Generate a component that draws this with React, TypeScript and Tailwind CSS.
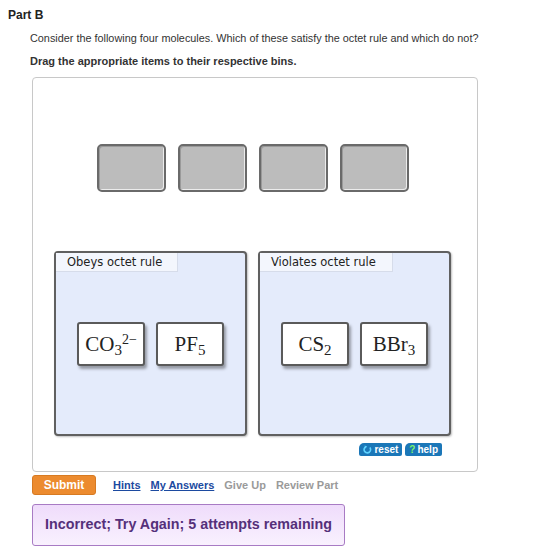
export default function App() {
  const slots = [0, 1, 2, 3];

  return (
    <div className="min-h-[555px] w-[560px] bg-white text-[#333] [font-family:'Liberation_Sans',Arial,sans-serif]">
      <div className="pl-[8px] pt-[8px] text-[12px] font-bold leading-[15px] text-[#222]">Part B</div>
      <div className="pl-[30px]">
        <p className="mt-[8px] text-[10.85px] leading-[14px] text-[#333]">
          Consider the following four molecules. Which of these satisfy the octet rule and which do not?
        </p>
        <p className="mt-[9px] text-[11px] font-bold leading-[14px] text-[#333]">
          Drag the appropriate items to their respective bins.
        </p>
      </div>

      <div className="ml-[32px] mt-[9px] h-[395px] w-[446px] rounded-[4px] border border-[#c8c8c8] bg-white">
        <div className="ml-[64px] mt-[66px] flex gap-[12px]">
          {slots.map(i => (
            <div
              key={i}
              className="h-[48px] w-[69px] rounded-[5px] border-2 border-[#6a6a6a] bg-[#bcbcbc] shadow-[inset_-1px_-1px_0_#ececec,inset_1px_1px_0_#9a9a9a]"
            />
          ))}
        </div>

        <div className="ml-[21px] mt-[59px] flex gap-[11px]">
          <Bin label="Obeys octet rule" tabWidth={122}>
            <Card>
              CO<Sub>3</Sub>
              <span className="relative -top-[7px] text-[14px]">2−</span>
            </Card>
            <Card>
              PF<Sub>5</Sub>
            </Card>
          </Bin>
          <Bin label="Violates octet rule" tabWidth={133}>
            <Card>
              CS<Sub>2</Sub>
            </Card>
            <Card>
              BBr<Sub>3</Sub>
            </Card>
          </Bin>
        </div>

        <div className="mr-[35px] mt-[7px] flex justify-end gap-[3px]">
          <button className="flex h-[13px] items-center gap-[2px] rounded-[2px] rounded-tl-[5px] bg-[#1b77b8] px-[4px] text-[10px] font-bold leading-none text-white">
            <svg width="9" height="9" viewBox="0 0 10 10">
              <path d="M7.6 2.8 A3.6 3.6 0 1 1 3.2 1.9" fill="none" stroke="#5fd3ff" strokeWidth="1.8" />
              <path d="M1.8 0.6 L4.6 1.6 L2.6 3.8 Z" fill="#5fd3ff" />
            </svg>
            reset
          </button>
          <button className="flex h-[13px] items-center gap-[2px] rounded-[2px] rounded-tl-[5px] bg-[#1b77b8] px-[4px] text-[10px] font-bold leading-none text-white">
            <span className="text-[#7cf36a]">?</span>
            help
          </button>
        </div>
      </div>

      <div className="ml-[32px] mt-[3px] flex items-center">
        <button className="h-[20px] w-[64px] rounded-[3px] border border-[#d77a22] bg-[#ec8b2f] text-[12px] font-bold text-white">
          Submit
        </button>
        <div className="ml-[17px] flex gap-[10px] text-[11px] font-bold">
          <span className="text-[#1c4aa0] underline">Hints</span>
          <span className="text-[#1c4aa0] underline">My Answers</span>
          <span className="text-[#9a9a9a]">Give Up</span>
          <span className="text-[#9a9a9a]">Review Part</span>
        </div>
      </div>

      <div className="ml-[32px] mt-[9px] flex h-[42px] w-[313px] items-center rounded-[3px] border border-[#a87bc4] bg-gradient-to-b from-[#efdcfb] to-[#f9f1fe] pl-[12px] text-[14.3px] font-bold text-[#55307a]">
        Incorrect; Try Again; 5 attempts remaining
      </div>
    </div>
  );
}

function Sub({ children }: { children: React.ReactNode }) {
  return <span className="relative top-[4px] text-[15px]">{children}</span>;
}

function Bin({ label, tabWidth, children }: { label: string; tabWidth: number; children: React.ReactNode }) {
  return (
    <div className="flex h-[185px] w-[193px] flex-col rounded-[4px] border-2 border-[#606060] bg-[#e4ebfb] shadow-[1px_1px_2px_rgba(0,0,0,0.25)]">
      <div
        className="h-[19px] border-r border-b border-[#d6dcea] bg-[#f3f6fd] pl-[11px] text-[11.5px] leading-[19px] text-[#222] [font-family:'DejaVu_Sans',Verdana,sans-serif]"
        style={{ width: tabWidth }}
      >
        {label}
      </div>
      <div className="mt-[50px] flex justify-center gap-[11px]">{children}</div>
    </div>
  );
}

function Card({ children }: { children: React.ReactNode }) {
  return (
    <div className="flex h-[44px] w-[68px] items-center justify-center rounded-[3px] border-2 border-[#5a5a5a] bg-white text-[21px] text-[#222] shadow-[2px_3px_3px_rgba(0,0,0,0.35)] [font-family:'Liberation_Serif','Times_New_Roman',serif]">
      <span className="whitespace-nowrap leading-none">{children}</span>
    </div>
  );
}
